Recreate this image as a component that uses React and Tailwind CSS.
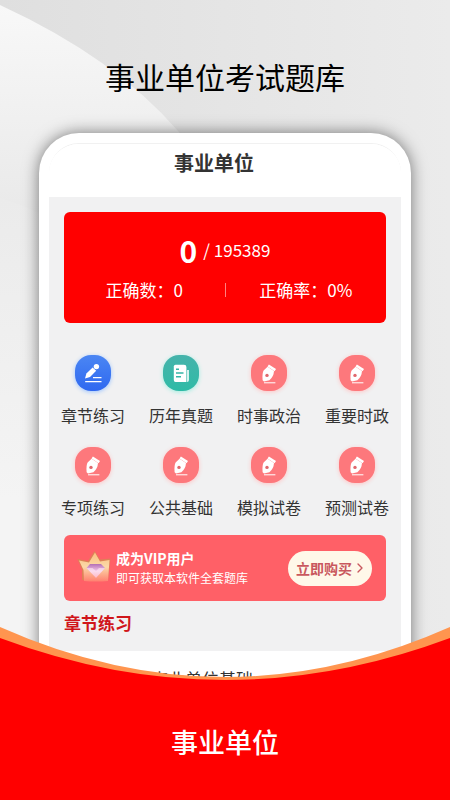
import React from 'react';
import { ChevronRight } from 'lucide-react';

const menuItems = [
    { label: '章节练习', icon: 'pencil' },
    { label: '历年真题', icon: 'paper' },
    { label: '时事政治', icon: 'pen' },
    { label: '重要时政', icon: 'pen' },
    { label: '专项练习', icon: 'pen' },
    { label: '公共基础', icon: 'pen' },
    { label: '模拟试卷', icon: 'pen' },
    { label: '预测试卷', icon: 'pen' },
];

const tileStyles = {
    pencil: 'bg-linear-to-b from-[#4b86f3] to-[#2f68f0] shadow-[0_1px_4px_#9cc4ff]',
    paper: 'bg-linear-to-b from-[#45b3ab] to-[#2dbba6] shadow-[0_1px_4px_#9feee0]',
    pen: 'bg-[#fd787c] shadow-[0_1px_4px_#ffc4c4]',
};

function MenuIcon({ type }) {
    if (type === 'pencil') {
        return (
            <svg viewBox="0 0 36 36" className="size-9" aria-hidden="true">
                <path d="M10 23.4 L11.4 18.6 L17.6 12.4 L21.2 15.8 L15 22 Z" fill="#fff" />
                <circle cx="21.4" cy="11.6" r="2.7" fill="#fff" />
                <path d="M18 22.6 H26.5 M10.2 26.6 H26.5" stroke="#fff" strokeWidth="1.4" />
            </svg>
        );
    }
    if (type === 'paper') {
        return (
            <svg viewBox="0 0 36 36" className="size-9" aria-hidden="true">
                <path d="M12.5 9.8 H21 Q23.4 9.8 23.4 12 V27 H12.5 Q10.8 27 10.8 25 V11.5 Q10.8 9.8 12.5 9.8 Z" fill="#fff" />
                <path d="M24.2 15 H25.8 V25 Q25.8 27 24.2 27 Z" fill="#fff" />
                <path d="M13 14.3 H16 M13 18 H20.5 M13 21.8 H18" stroke="#35b5a7" strokeWidth="1.4" />
            </svg>
        );
    }
    return (
        <svg viewBox="0 0 36 36" className="size-9" aria-hidden="true">
            <path d="M17.9 9.4 L25 14 L23.6 16.2 L16.5 11.6 Z" fill="#fff" />
            <path
                d="M16.6 11.8 L23 16 Q22.8 21.5 18.4 25.2 L13 26.4 L11.6 25.2 Q11 18.6 12.6 15.6 Z"
                fill="#fff"
            />
            <circle cx="16" cy="20.4" r="1.7" fill="#e0686d" />
            <path d="M13 27.8 H24.4" stroke="#fff" strokeWidth="1" />
        </svg>
    );
}

function VipBadge() {
    return (
        <svg viewBox="0 0 36 36" className="size-9" aria-hidden="true">
            <defs>
                <linearGradient id="crown" x1="0" y1="0" x2="0" y2="1">
                    <stop offset="0" stopColor="#fbc07f" />
                    <stop offset="0.5" stopColor="#fbd9a8" />
                    <stop offset="1" stopColor="#ff8070" />
                </linearGradient>
                <linearGradient id="gem" x1="0" y1="0" x2="0" y2="1">
                    <stop offset="0" stopColor="#b36fb5" />
                    <stop offset="0.5" stopColor="#f4c6e6" />
                    <stop offset="1" stopColor="#ff6f79" />
                </linearGradient>
            </defs>
            <path d="M1.5 9 L12 11 L18.5 1 L24 9.5 L34.5 8.5 L32 30 Q20 32 6 30 L6 20 Z" fill="#dd8257" />
            <path d="M3 10.5 L13 12.5 L19 2.5 L24 11.5 L33.5 10 L32 31 Q20 32 8 31 L7.5 20 Z" fill="url(#crown)" />
            <path d="M14 14 H25 L29 18 L20 28 L10.5 18 Z" fill="url(#gem)" />
            <path d="M10.5 18 H16.5 L20 21 L23 18 H29 L20 28 Z" fill="#ffe9f5" opacity="0.6" />
        </svg>
    );
}

function Backdrop() {
    return (
        <svg
            viewBox="0 0 450 800"
            preserveAspectRatio="none"
            className="absolute inset-0 h-full w-full"
            aria-hidden="true"
        >
            <defs>
                <linearGradient id="base" x1="0" y1="0" x2="1" y2="0">
                    <stop offset="0" stopColor="#dfdfdf" />
                    <stop offset="1" stopColor="#ebebeb" />
                </linearGradient>
                <linearGradient id="swoosh" x1="0" y1="0" x2="0" y2="1">
                    <stop offset="0" stopColor="#f8f8f8" />
                    <stop offset="1" stopColor="#e6e6e6" />
                </linearGradient>
                <linearGradient id="lower" x1="0" y1="0" x2="0" y2="1">
                    <stop offset="0" stopColor="#ebebeb" />
                    <stop offset="0.5" stopColor="#f4f4f4" />
                </linearGradient>
            </defs>
            <rect width="450" height="800" fill="url(#base)" />
            <path d="M0 5 Q115 58 178 131 Q230 190 250 260 H0 Z" fill="url(#swoosh)" />
            <path d="M0 198 Q40 210 80 235 V800 H0 Z" fill="url(#lower)" />
        </svg>
    );
}

function StatsCard() {
    return (
        <section className="mx-[15px] mt-[15px] rounded-md bg-[#ff0000] pt-[22px] pb-[19px] text-[17px] text-white">
            <p className="flex h-8 items-center justify-center gap-1.5">
                <strong className="text-[30px] leading-8 font-bold">0</strong>
                <span>/ 195389</span>
            </p>
            <div className="mt-2.5 flex h-7 items-center">
                <p className="flex-1 text-center">正确数：0</p>
                <span className="h-3.5 w-px bg-white/50"></span>
                <p className="flex-1 text-center">正确率：0%</p>
            </div>
        </section>
    );
}

function VipBanner() {
    return (
        <section className="mx-[15px] mt-3.5 flex h-[66px] items-center rounded-md bg-[#ff6067] pr-3.5 pl-3 text-white">
            <VipBadge />
            <div className="ml-1 flex-1">
                <h2 className="text-sm leading-5 font-bold">成为VIP用户</h2>
                <p className="text-xs leading-5 whitespace-nowrap">即可获取本软件全套题库</p>
            </div>
            <button
                type="button"
                className="flex h-[35px] w-[84px] items-center justify-center rounded-full bg-[#fff8e9] text-sm font-bold whitespace-nowrap text-[#c9585e]"
            >
                立即购买
                <ChevronRight className="-mr-1 size-4" strokeWidth={2} />
            </button>
        </section>
    );
}

function App() {
    return (
        <div className="relative flex min-h-screen flex-col overflow-hidden font-['Noto_Sans_CJK_SC','Noto_Sans',sans-serif]">
            <Backdrop />
            <h1 className="relative pt-[54px] text-center text-[30px] leading-[44px] text-black">事业单位考试题库</h1>

            <main className="relative mx-[39px] mt-[35px] rounded-t-[40px] bg-white px-2.5 pt-2.5 shadow-[0_0_16px_rgba(0,0,0,0.5)]">
                <div className="overflow-hidden rounded-t-[30px] border-t border-[#f1f1f1]">
                    <header className="h-[53px] bg-white pt-[3px] pr-[22px]">
                        <h2 className="text-center text-xl leading-8 font-bold text-[#333]">事业单位</h2>
                    </header>
                    <div className="flow-root bg-[#f1f1f2]">
                        <StatsCard />
                        <nav className="mt-8 grid grid-cols-4 gap-y-[18px]">
                            {menuItems.map((item) => (
                                <a key={item.label} href="#" className="flex flex-col items-center gap-2.5">
                                    <span className={`rounded-2xl ${tileStyles[item.icon]}`}>
                                        <MenuIcon type={item.icon} />
                                    </span>
                                    <span className="text-base leading-7 whitespace-nowrap text-[#333]">{item.label}</span>
                                </a>
                            ))}
                        </nav>
                        <VipBanner />
                        <h2 className="mx-[15px] mt-2 mb-[14px] text-[17px] leading-7 font-bold text-[#d0161b]">章节练习</h2>
                    </div>
                    <p className="bg-white pt-3.5 pl-[102px] text-[17px] leading-7 text-[#333]">事业单位基础</p>
                </div>
            </main>

            <footer className="relative -mt-[67px] flex flex-1 flex-col">
                <svg viewBox="0 0 450 56" preserveAspectRatio="none" className="block h-14 w-full" aria-hidden="true">
                    <path d="M0 1 Q225 101 450 1 V56 H0 Z" fill="#ff954f" />
                    <path d="M0 12 Q225 96 450 12 V56 H0 Z" fill="#ff0000" />
                </svg>
                <p className="flex-1 bg-[#ff0000] pt-10 pb-8 text-center text-[27px] leading-10 font-medium text-white">
                    事业单位
                </p>
            </footer>
        </div>
    );
}

export default App;
